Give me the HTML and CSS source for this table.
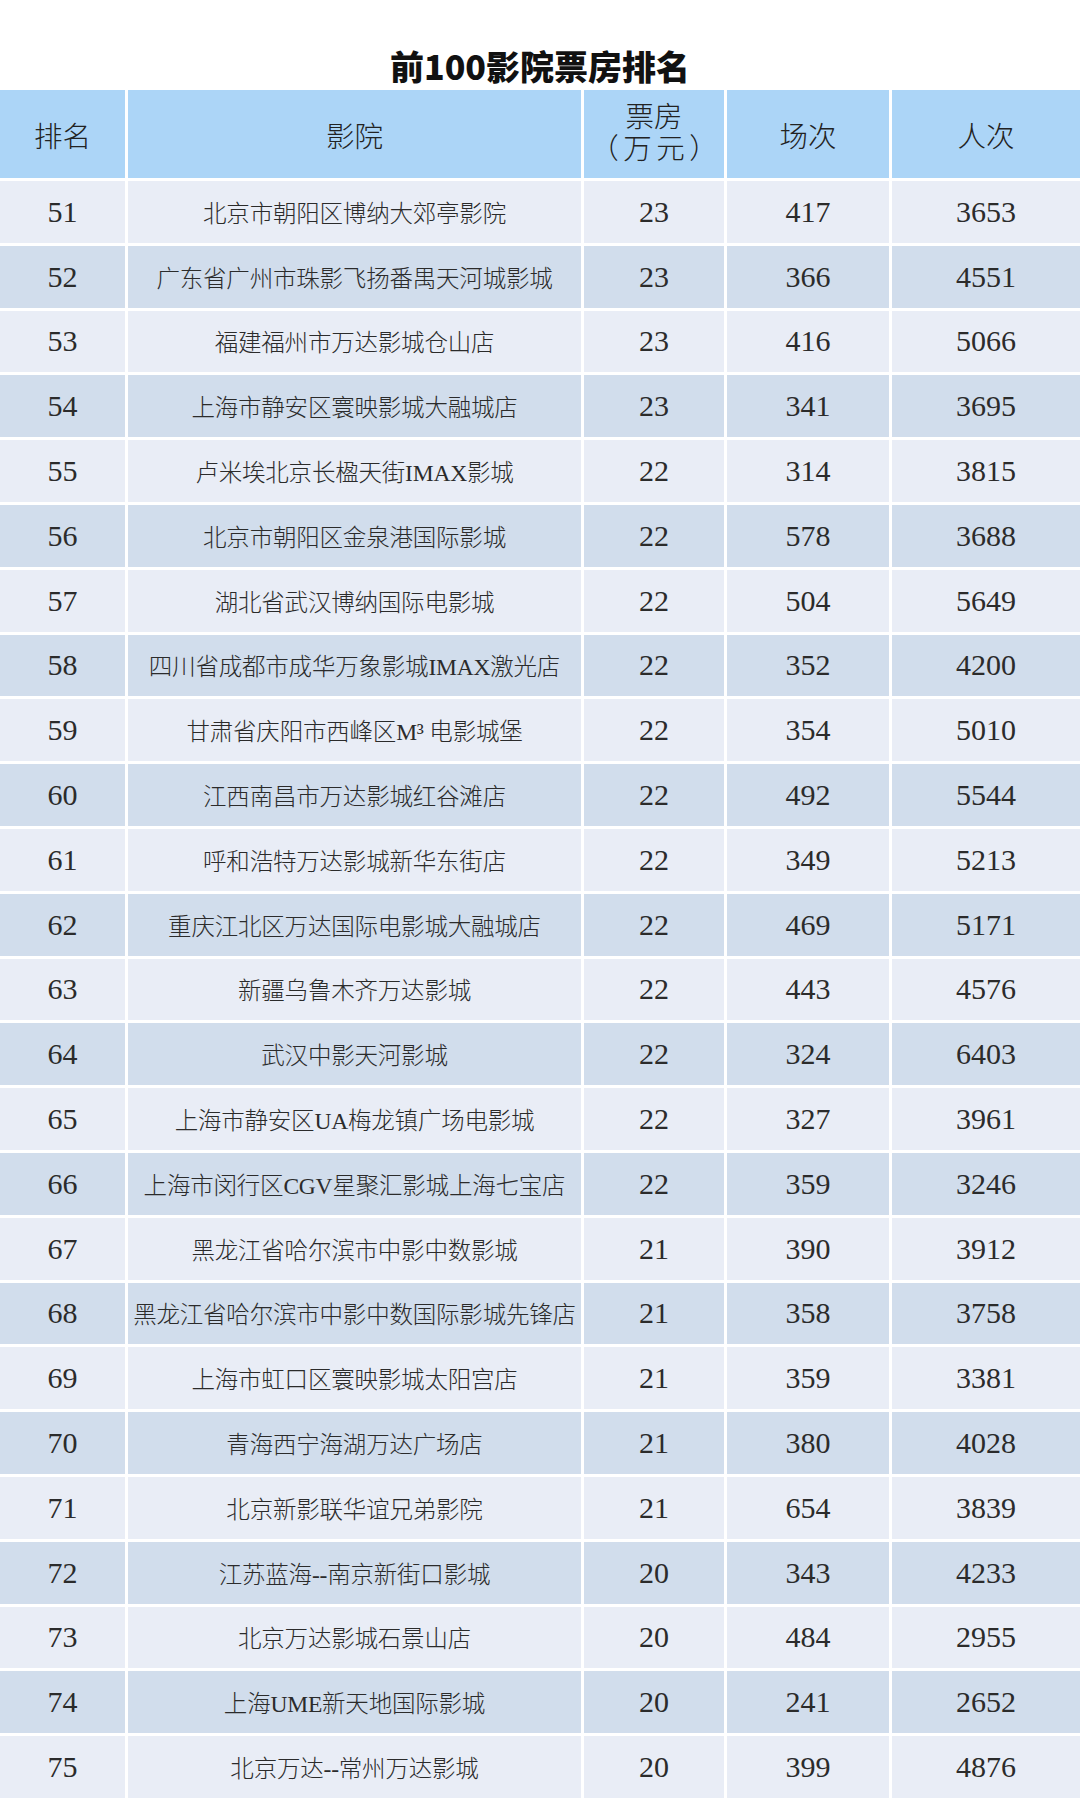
FILE: index.html
```html
<!DOCTYPE html>
<html lang="zh-CN">
<head>
<meta charset="utf-8">
<title>前100影院票房排名</title>
<link rel="stylesheet" href="styles.css">
</head>
<body>
<div class="page">
  <h1 class="title">前100影院票房排名</h1>
  <div class="table">
    <div class="row head">
      <div class="cell">排名</div>
      <div class="cell">影院</div>
      <div class="cell two"><span>票房</span><span class="unit">（万元）</span></div>
      <div class="cell">场次</div>
      <div class="cell">人次</div>
    </div>
    <div class="row"><div class="cell num">51</div><div class="cell name">北京市朝阳区博纳大郊亭影院</div><div class="cell num">23</div><div class="cell num">417</div><div class="cell num">3653</div></div>
    <div class="row"><div class="cell num">52</div><div class="cell name">广东省广州市珠影飞扬番禺天河城影城</div><div class="cell num">23</div><div class="cell num">366</div><div class="cell num">4551</div></div>
    <div class="row"><div class="cell num">53</div><div class="cell name">福建福州市万达影城仓山店</div><div class="cell num">23</div><div class="cell num">416</div><div class="cell num">5066</div></div>
    <div class="row"><div class="cell num">54</div><div class="cell name">上海市静安区寰映影城大融城店</div><div class="cell num">23</div><div class="cell num">341</div><div class="cell num">3695</div></div>
    <div class="row"><div class="cell num">55</div><div class="cell name">卢米埃北京长楹天街IMAX影城</div><div class="cell num">22</div><div class="cell num">314</div><div class="cell num">3815</div></div>
    <div class="row"><div class="cell num">56</div><div class="cell name">北京市朝阳区金泉港国际影城</div><div class="cell num">22</div><div class="cell num">578</div><div class="cell num">3688</div></div>
    <div class="row"><div class="cell num">57</div><div class="cell name">湖北省武汉博纳国际电影城</div><div class="cell num">22</div><div class="cell num">504</div><div class="cell num">5649</div></div>
    <div class="row"><div class="cell num">58</div><div class="cell name">四川省成都市成华万象影城IMAX激光店</div><div class="cell num">22</div><div class="cell num">352</div><div class="cell num">4200</div></div>
    <div class="row"><div class="cell num">59</div><div class="cell name">甘肃省庆阳市西峰区M³ 电影城堡</div><div class="cell num">22</div><div class="cell num">354</div><div class="cell num">5010</div></div>
    <div class="row"><div class="cell num">60</div><div class="cell name">江西南昌市万达影城红谷滩店</div><div class="cell num">22</div><div class="cell num">492</div><div class="cell num">5544</div></div>
    <div class="row"><div class="cell num">61</div><div class="cell name">呼和浩特万达影城新华东街店</div><div class="cell num">22</div><div class="cell num">349</div><div class="cell num">5213</div></div>
    <div class="row"><div class="cell num">62</div><div class="cell name">重庆江北区万达国际电影城大融城店</div><div class="cell num">22</div><div class="cell num">469</div><div class="cell num">5171</div></div>
    <div class="row"><div class="cell num">63</div><div class="cell name">新疆乌鲁木齐万达影城</div><div class="cell num">22</div><div class="cell num">443</div><div class="cell num">4576</div></div>
    <div class="row"><div class="cell num">64</div><div class="cell name">武汉中影天河影城</div><div class="cell num">22</div><div class="cell num">324</div><div class="cell num">6403</div></div>
    <div class="row"><div class="cell num">65</div><div class="cell name">上海市静安区UA梅龙镇广场电影城</div><div class="cell num">22</div><div class="cell num">327</div><div class="cell num">3961</div></div>
    <div class="row"><div class="cell num">66</div><div class="cell name">上海市闵行区CGV星聚汇影城上海七宝店</div><div class="cell num">22</div><div class="cell num">359</div><div class="cell num">3246</div></div>
    <div class="row"><div class="cell num">67</div><div class="cell name">黑龙江省哈尔滨市中影中数影城</div><div class="cell num">21</div><div class="cell num">390</div><div class="cell num">3912</div></div>
    <div class="row"><div class="cell num">68</div><div class="cell name">黑龙江省哈尔滨市中影中数国际影城先锋店</div><div class="cell num">21</div><div class="cell num">358</div><div class="cell num">3758</div></div>
    <div class="row"><div class="cell num">69</div><div class="cell name">上海市虹口区寰映影城太阳宫店</div><div class="cell num">21</div><div class="cell num">359</div><div class="cell num">3381</div></div>
    <div class="row"><div class="cell num">70</div><div class="cell name">青海西宁海湖万达广场店</div><div class="cell num">21</div><div class="cell num">380</div><div class="cell num">4028</div></div>
    <div class="row"><div class="cell num">71</div><div class="cell name">北京新影联华谊兄弟影院</div><div class="cell num">21</div><div class="cell num">654</div><div class="cell num">3839</div></div>
    <div class="row"><div class="cell num">72</div><div class="cell name">江苏蓝海--南京新街口影城</div><div class="cell num">20</div><div class="cell num">343</div><div class="cell num">4233</div></div>
    <div class="row"><div class="cell num">73</div><div class="cell name">北京万达影城石景山店</div><div class="cell num">20</div><div class="cell num">484</div><div class="cell num">2955</div></div>
    <div class="row"><div class="cell num">74</div><div class="cell name">上海UME新天地国际影城</div><div class="cell num">20</div><div class="cell num">241</div><div class="cell num">2652</div></div>
    <div class="row"><div class="cell num">75</div><div class="cell name">北京万达--常州万达影城</div><div class="cell num">20</div><div class="cell num">399</div><div class="cell num">4876</div></div>
  </div>
</div>
</body>
</html>
```
FILE: styles.css
```css
html, body {
  margin: 0;
  padding: 0;
  background: #ffffff;
}

.page {
  width: 1080px;
  font-family: "Liberation Serif", "Noto Sans CJK SC", serif;
  color: #2b2b2b;
}

.title {
  margin: 0;
  height: 90px;
  box-sizing: border-box;
  padding-bottom: 6px;
  display: flex;
  align-items: flex-end;
  justify-content: center;
  font-family: "Noto Sans CJK SC", "Noto Sans", sans-serif;
  font-weight: 900;
  font-size: 34px;
  line-height: 36px;
  color: #111111;
}

.table {
  display: grid;
  grid-template-columns: 125px 453px 140px 162px 188px;
  grid-template-rows: 88px;
  grid-auto-rows: 61.8px;
  column-gap: 3px;
  row-gap: 3px;
}

.row {
  display: contents;
}

.cell {
  display: flex;
  align-items: center;
  justify-content: center;
  white-space: nowrap;
  background: #e9edf6;
  font-weight: 300;
}

.row:nth-child(odd) .cell {
  background: #d1ddec;
}

.row.head .cell {
  background: #acd5f7;
  font-size: 28.5px;
  color: #222222;
}

.two {
  flex-direction: column;
  line-height: 32px;
}

.unit {
  letter-spacing: 4.5px;
  padding-left: 4.5px;
}

.num {
  font-size: 30px;
}

.name {
  font-size: 23.5px;
  letter-spacing: -0.2px;
}
```
